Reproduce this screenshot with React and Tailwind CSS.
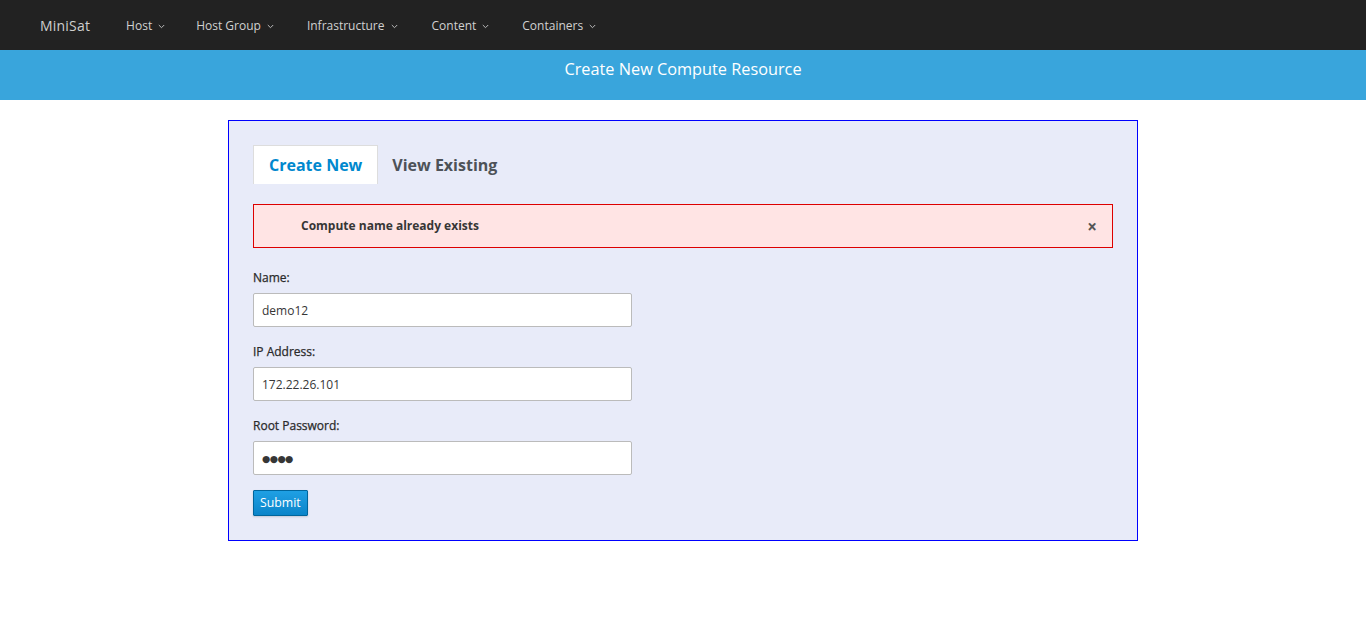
import React from "react";

const Chevron = () => (
  <svg width="7" height="5" viewBox="0 0 7 5" className="ml-[6px] mt-[1px]" fill="none">
    <path d="M0.8 1 L3.5 3.7 L6.2 1" stroke="#bbbbbb" strokeWidth="1" />
  </svg>
);

const NavItem = ({ label, className }) => (
  <div className={"flex items-center text-[12px] text-[#d1d1d1] " + className}>
    <span>{label}</span>
    <Chevron />
  </div>
);

const Field = ({ label, value, mono }) => (
  <div className="flex flex-col">
    <label className="text-[12px] text-[#2a2a2a] leading-[16px] [-webkit-text-stroke:0.25px_#2a2a2a]">{label}</label>
    <input
      type="text"
      readOnly={mono}
      defaultValue={value}
      className={
        "mt-[7px] h-[34px] w-[379px] rounded-[2px] border border-[#bbbbbb] bg-white px-[8px] text-[#363636] outline-none " +
        (mono ? "text-[9.5px] tracking-[-0.6px] text-[#333333]" : "text-[12px]")
      }
      style={mono ? { fontFamily: "'DejaVu Sans', sans-serif" } : undefined}
    />
  </div>
);

export default function App() {
  return (
    <div className="min-h-[628px] bg-white" style={{ fontFamily: "'Open Sans', 'Noto Sans', sans-serif" }}>
      <nav className="h-[50px] bg-[#222222] flex items-center pt-[1px]">
        <div className="ml-[40px] text-[14px] text-[#cfcfcf] tracking-[0.2px]">MiniSat</div>
        <NavItem label="Host" className="ml-[36px]" />
        <NavItem label="Host Group" className="ml-[31px]" />
        <NavItem label="Infrastructure" className="ml-[33px]" />
        <NavItem label="Content" className="ml-[34px]" />
        <NavItem label="Containers" className="ml-[33px]" />
      </nav>
      <div className="h-[50px] bg-[#39a5dc] flex items-center justify-center">
        <h1 className="text-[16.3px] text-white -mt-[12px]">Create New Compute Resource</h1>
      </div>
      <div className="flex justify-center pt-[20px]">
        <div className="w-[910px] h-[421px] border border-[#0000ff] bg-[#e8ebf9] px-[24px] pt-[24px]">
          <div className="flex items-end">
            <div className="h-[39px] px-[15px] flex items-center bg-white border border-b-0 border-[#dddddd] text-[16px] font-bold text-[#0088ce]">
              Create New
            </div>
            <div className="h-[39px] px-[14px] flex items-center text-[16px] font-bold text-[#4d5258]">
              View Existing
            </div>
          </div>
          <div className="mt-[20px] h-[44px] border border-[#dd0000] bg-[#ffe4e4] flex items-center justify-between pl-[47px] pr-[15px]">
            <span className="text-[12px] font-bold text-[#363636]">Compute name already exists</span>
            <span className="text-[17px] font-bold text-[#555555] leading-none">×</span>
          </div>
          <div className="mt-[22px] flex flex-col gap-[17px]">
            <Field label="Name:" value="demo12" />
            <Field label="IP Address:" value="172.22.26.101" />
            <Field label="Root Password:" value="●●●●" mono />
          </div>
          <button className="mt-[15px] h-[26px] px-[6px] rounded-[1px] border border-[#00659c] bg-gradient-to-b from-[#1fa0e4] to-[#0a84c9] text-white text-[12.3px] shadow-[0_1px_2px_rgba(0,0,0,0.15)]">
            Submit
          </button>
        </div>
      </div>
    </div>
  );
}
